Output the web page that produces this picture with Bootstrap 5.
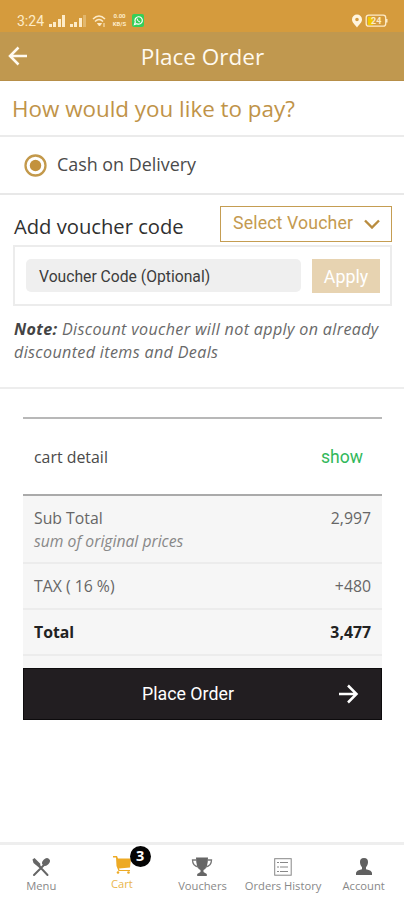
<!DOCTYPE html>
<html lang="en">
<head>
<meta charset="utf-8">
<meta name="viewport" content="width=device-width, initial-scale=1">
<title>Place Order</title>
<link href="https://cdn.jsdelivr.net/npm/bootstrap@5.3.0/dist/css/bootstrap.min.css" rel="stylesheet">
<style>
body{font-family:"Open Sans","Noto Sans",sans-serif;background:#fff;color:#4a4a4a;height:900px;overflow:hidden;line-height:1.2}
svg{display:block;flex:none}
.rb{font-family:Roboto,"Liberation Sans",sans-serif}
.status{height:32px;background:#d59b3d;color:#fdebc8;padding:9px 16px 0 17px}
.clock{font-size:14px;line-height:24px;width:32px}
.rate{font-size:6px;line-height:8px;font-weight:700;text-align:center;width:17px;padding-top:3px}
.topbar{height:49px;background:#c0984f;color:#fffaf0;border-bottom:1px solid #b78f49}
.topbar h1{font-size:22.5px;font-weight:400;line-height:48px;padding:2px 27px 0 0}
.topbar svg{margin-left:8px}
.ask{height:56px;font-size:22.4px;line-height:55px;color:#c09348;padding-left:12px;border-bottom:2px solid #ebebeb}
.pay{height:58px;border-bottom:2px solid #e8e8e8;padding-left:24px;gap:10px;font-size:17.9px}
.voucher{height:194px;border-bottom:2px solid #ededed;padding:11px 12px 0 13px}
.vhead{height:36px}
.vhead h2{font-size:20.2px;font-weight:400;color:#303030;line-height:41px;padding-left:1px}
.select{width:172px;height:36px;border:1.5px solid #c59d52;color:#c49a50;font-size:17.7px;padding:0 11px 0 12px;letter-spacing:.15px}
.vbox{height:61px;margin-top:3px;border:2px solid #ececec;padding:0 10px 0 11px}
.vinput{width:275px;height:33px;background:#efefef;border-radius:5px;color:#3c3c3c;font-size:15.7px;padding-left:13px;line-height:35px}
.apply{width:68px;height:34px;background:#e7d3b1;color:#fff;font-size:17.8px;line-height:35px}
.note{font-size:16.1px;line-height:23px;letter-spacing:.35px;margin-top:12px;padding-left:1px;color:#696969;white-space:nowrap}
.note b{color:#444}
.cart{margin:28px 22px 0 23px}
.detail{height:79px;border-top:2px solid #b8b8b8;border-bottom:2px solid #aaa;padding:2px 19px 0 11px;font-size:15.9px}
.show-link{font-size:17.6px;color:#32b85b}
.sums{background:#f6f6f6;font-size:15.8px;color:#666;height:172px}
.line{padding:0 11px;height:46px;border-bottom:2px solid #ececec}
.line.sub{height:68px;padding-top:11px;line-height:22.5px}
.line.total{color:#222;font-weight:700}
.sub em{color:#888;font-size:15.7px}
.order{height:52px;background:#221e21;border:1px solid #0d0b0d;color:#fff;font-size:17.8px;padding:0 22px 0 118px}
.tabs{height:58px;border-top:3px solid #eee;color:#888;font-size:11.2px;padding-left:1px}
.tabs>div{width:80.8px;height:55px;padding-top:11px;line-height:15px;white-space:nowrap}
.tabs svg{height:22px}
.tabs .on{color:#e9b64a;padding-top:9px}
.count{position:absolute;left:48px;top:1px;width:21px;height:21px;border-radius:50%;background:#050505;color:#fff;font-weight:700;font-size:14.5px;line-height:20px;text-align:center}
</style>
<script src="https://cdn.jsdelivr.net/npm/bootstrap@5.3.0/dist/js/bootstrap.bundle.min.js"></script>
</head>
<body class="d-flex flex-column">
<div class="status d-flex">
  <span class="clock rb">3:24</span>
  <svg width="39" height="24" viewBox="0 0 39 24" fill="#fdebc8"><path d="M0 15h3v3H0zM4 13h3v5H4zM9 10h3v8H9zM13 6h3v12h-3zM21 15h3v3h-3zM25 13h3v5h-3zM30 9h3v9h-3z"/><path opacity=".35" d="M34 6h3v12h-3z"/></svg>
  <svg class="ms-1" width="15" height="24" viewBox="0 0 15 24" fill="none" stroke="#fdebc8" stroke-width="1.500"><path d="M1 10q6-6 12 0M3 12.500q4-4 8 0"/><path d="M5.500 14.500h4L7.500 17zM12 14v4" fill="#fdebc8" stroke-width="1"/></svg>
  <span class="rate rb ms-1"><span class="d-block">0.00</span><span class="d-block">KB/S</span></span>
  <svg class="ms-1" width="13" height="24" viewBox="0 0 13 24"><rect y="5" width="12" height="13" rx="2" fill="#36cf58"/><path d="M2.500 15.500l.8-2.500a3.700 3.700 0 1 1 1.600 1.700z" fill="none" stroke="#fff" stroke-width="1.200"/><path d="M5 9.500q.3 3 3 3.500" stroke="#fff" fill="none"/></svg>
  <svg class="ms-auto" width="36" height="24" viewBox="0 0 36 24"><path fill="#fff5df" fill-rule="evenodd" d="M5 5.500a5 5 0 0 1 5 5c0 3-2.500 4.500-5 8-2.500-3.500-5-5-5-8a5 5 0 0 1 5-5zm0 3.200a1.800 1.800 0 1 0 0 3.600 1.800 1.800 0 0 0 0-3.600z"/><rect x="14.200" y="6.200" width="19.500" height="11" rx="2.500" fill="none" stroke="#fdebc8" stroke-width="1.300"/><path d="M34 10h1.500v3.500H34z" fill="#fdebc8"/><rect x="16" y="8" width="5" height="8" fill="#f2c800"/><text x="19" y="15" font-family="Roboto" font-size="9" font-weight="700" fill="#fdebc8">24</text></svg>
</div>
<header class="topbar d-flex align-items-center">
  <svg width="20" height="20" viewBox="0 0 20 20" fill="none" stroke="#fffaf0" stroke-width="2.500"><path d="M19 10H2M10.500 1.500L2 10l8.500 8.500"/></svg>
  <h1 class="mb-0 flex-fill text-center">Place Order</h1>
</header>
<div class="ask">How would you like to pay?</div>
<div class="pay d-flex align-items-center">
  <svg width="23" height="23" viewBox="0 0 23 23"><circle cx="11.500" cy="11.500" r="10" fill="none" stroke="#c3994b" stroke-width="2.300"/><circle cx="11.500" cy="11.500" r="5.700" fill="#c3923d"/></svg>
  <span>Cash on Delivery</span>
</div>
<section class="voucher">
  <div class="vhead d-flex justify-content-between">
    <h2 class="mb-0">Add voucher code</h2>
    <div class="select rb d-flex align-items-center justify-content-between">Select Voucher
      <svg width="16" height="10" viewBox="0 0 16 10" fill="none" stroke="#b98c3f" stroke-width="2.400"><path d="M1 1.500l7 7 7-7"/></svg>
    </div>
  </div>
  <div class="vbox d-flex align-items-center justify-content-between">
    <div class="vinput rb">Voucher Code (Optional)</div>
    <div class="apply rb text-center">Apply</div>
  </div>
  <p class="note fst-italic mb-0"><b>Note:</b> Discount voucher will not apply on already<br>discounted items and Deals</p>
</section>
<main class="cart">
  <div class="detail d-flex align-items-center justify-content-between"><span>cart detail</span><span class="show-link rb">show</span></div>
  <div class="sums">
    <div class="line sub d-flex justify-content-between"><div>Sub Total<br><em>sum of original prices</em></div><span>2,997</span></div>
    <div class="line d-flex align-items-center justify-content-between"><span>TAX ( 16 %)</span><span>+480</span></div>
    <div class="line total d-flex align-items-center justify-content-between"><span>Total</span><span>3,477</span></div>
  </div>
  <div class="order rb d-flex align-items-center justify-content-between">Place Order
    <svg width="21" height="20" viewBox="0 0 21 20" fill="none" stroke="#fff" stroke-width="2.500"><path d="M1 10h17M10 1.500l8.500 8.500-8.500 8.500"/></svg>
  </div>
</main>
<nav class="tabs d-flex mt-auto">
  <div class="d-flex flex-column align-items-center">
    <svg width="20" height="22" viewBox="0 0 20 22" fill="#666"><path d="M1.500 3.500L3.500 2l5.500 5.500 1 4-1.500.5-6-5z"/><path d="M9 11l7.500 8M3 19L13 9" stroke="#666" stroke-width="2" stroke-linecap="round"/><ellipse cx="15" cy="6" rx="3.300" ry="4.300" transform="rotate(45 15 6)"/></svg>Menu</div>
  <div class="on d-flex flex-column align-items-center position-relative">
    <svg width="20" height="22" viewBox="0 0 20 22" fill="#edaa25"><path d="M1 2h4l1 2.500h13l-1 9-11 1 .5 1.500H18v1H6.500L4.500 12 4 3.500H1z"/><circle cx="6" cy="18.500" r="1.300"/><circle cx="16.500" cy="18.500" r="1.300"/></svg>Cart<span class="count">3</span></div>
  <div class="d-flex flex-column align-items-center">
    <svg width="22" height="22" viewBox="0 0 22 22" fill="#666"><path d="M5 1.500h12q0 11-4.500 12.500V16l3.300 2v2H6.200v-2l3.300-2v-2Q5 12.500 5 1.500z"/><path d="M6 4H1.500q0 6 6 7M16 4h4.500q0 6-6 7" fill="none" stroke="#777" stroke-width="1.300"/></svg>Vouchers</div>
  <div class="d-flex flex-column align-items-center">
    <svg width="18" height="22" viewBox="0 0 18 22" fill="none" stroke="#888"><rect x=".7" y="2.700" width="16.500" height="16.500"/><path d="M3 6.500h2M6 6.500h8M3 11h2M6 11h8M3 15.500h2M6 15.500h8"/></svg>Orders History</div>
  <div class="d-flex flex-column align-items-center">
    <svg width="18" height="22" viewBox="0 0 18 22" fill="#606060"><path d="M9 2c3 0 4.300 2 4 4.500-.2 2-1 3.500-2 4.700v2q6 1.300 6 3.800v2H1v-2q0-2.500 6-3.800v-2C6 10 5.200 8.500 5 6.500 4.700 4 6 2 9 2z"/></svg>Account</div>
</nav>
</body>
</html>
